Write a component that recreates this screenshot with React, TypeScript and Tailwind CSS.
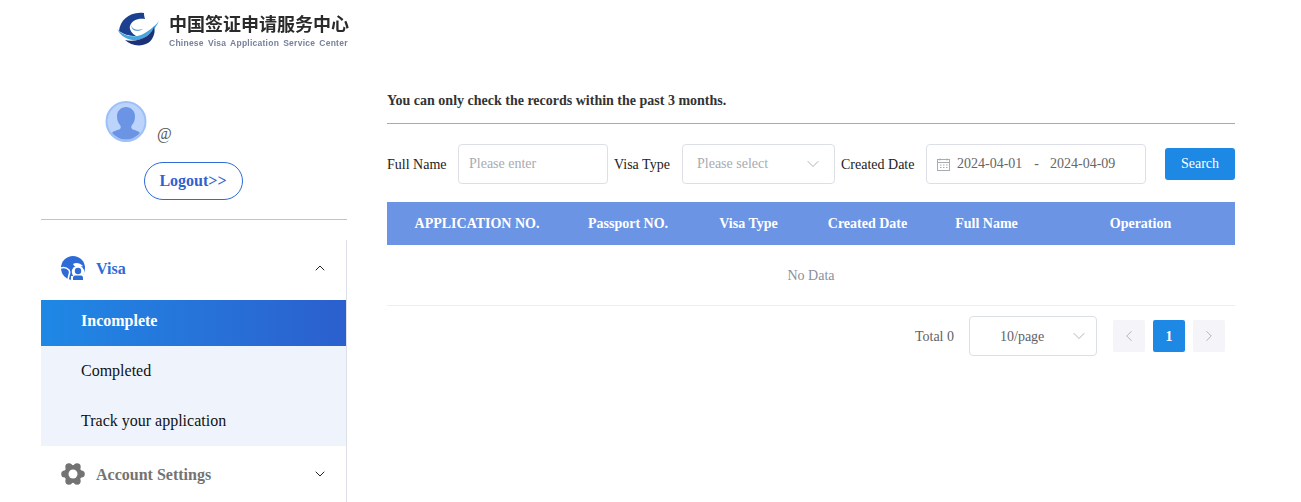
import { ChevronDown, ChevronLeft, ChevronRight, ChevronUp } from "lucide-react";

function Logo() {
    return (
        <div className="flex items-start">
            <svg width="44" height="36" viewBox="0 0 44 36" className="mt-[12px] blur-[0.4px]">
                <path d="M27 1C13-1 3 8 2 19c4 3 10 5 17 5-5-3-7-7-6-10 2-6 8-8 15-7-1-3-1-5-1-6z" fill="#1c3f8f" />
                <path d="M14 12c0 5 6 7 12 5-4 3-12 3-12-5z" fill="#3f8fd0" />
                <path d="M0 17c6 7 16 9 24 6 7-3 14-9 18-14-4 9-12 17-21 19C12 29 4 25 0 17z" fill="#45a5dd" />
                <path d="M8 28c7 2 16 0 22-4 4-3 6-6 7-9 2 5-1 13-6 16-7 4-17 3-23-3z" fill="#1c3278" />
            </svg>
            <div className="ml-[8px] mt-[12px] flex flex-col blur-[0.3px]">
                <span className="font-['Noto_Sans_CJK_SC',sans-serif] text-[18px] leading-[22px] font-bold text-[#2a2a2a] whitespace-nowrap">
                    中国签证申请服务中心
                </span>
                <span className="font-['Liberation_Sans',sans-serif] mt-[3px] text-[8.5px] leading-[12px] font-bold text-[#77819c] tracking-[0.25px] whitespace-nowrap [word-spacing:1.5px]">
                    Chinese Visa Application Service Center
                </span>
            </div>
        </div>
    );
}

function Avatar() {
    return (
        <svg width="42" height="42" viewBox="0 0 42 42">
            <defs>
                <clipPath id="avatar-clip">
                    <circle cx="21" cy="20.5" r="18" />
                </clipPath>
            </defs>
            <circle cx="21" cy="20.5" r="19.5" fill="#bcd4fb" stroke="#9cc0f7" strokeWidth="2" />
            <g clipPath="url(#avatar-clip)" fill="#6b94e4">
                <path d="M21 6c-5 0-9 4-9 9 0 4 1 7 3 9 1 1 1 3 0 4-2 1-7 2-9 5v9h30v-9c-2-3-7-4-9-5-1-1-1-3 0-4 2-2 3-5 3-9 0-5-4-9-9-9z" />
            </g>
        </svg>
    );
}

function GlobeIcon() {
    return (
        <svg width="24" height="24" viewBox="0 0 24 24" className="mb-[4px]">
            <circle cx="12" cy="12" r="12" fill="#2e6bd6" />
            <path d="M0 12c3-1 6 0 8 2 1 2 1 3 0 5l-1 5" fill="none" stroke="#fff" strokeWidth="1.6" />
            <path d="M12 8c3-2 7-1 10 2-3 1-5 2-6 1-2 0-3-1-4-3z" fill="#fff" />
            <circle cx="17" cy="16" r="6.2" fill="#fff" />
            <path d="M10 20h14v4H10z" fill="#fff" />
            <circle cx="17" cy="15" r="3.2" fill="#2e6bd6" />
            <path d="M12 24v-2.5c0-1 1-2 2-2h6c1 0 2 1 2 2V24z" fill="#2e6bd6" />
        </svg>
    );
}

const gearLobes = [0, 60, 120, 180, 240, 300];

function GearIcon() {
    return (
        <svg width="24" height="24" viewBox="0 0 24 24">
            <circle cx="12" cy="12" r="9" fill="#737373" />
            {gearLobes.map((angle) => (
                <circle
                    key={angle}
                    cx={12 + 8.2 * Math.cos((angle * Math.PI) / 180)}
                    cy={12 + 8.2 * Math.sin((angle * Math.PI) / 180)}
                    r="3.6"
                    fill="#737373"
                />
            ))}
            <circle cx="12" cy="12" r="4.5" fill="#fff" />
        </svg>
    );
}

function CalendarIcon() {
    return (
        <svg width="13" height="13" viewBox="0 0 13 13" fill="none" stroke="#a8abb2">
            <rect x="0.5" y="1.5" width="12" height="11" />
            <path d="M0.5 4.5h12M3 0.5v2M10 0.5v2" />
            <path d="M3 7h1.5M6 7h1.5M9 7h1.5M3 9.5h1.5M6 9.5h1.5M9 9.5h1.5" />
        </svg>
    );
}

const columns = ["APPLICATION NO.", "Passport NO.", "Visa Type", "Created Date", "Full Name", "Operation"];

function App() {
    return (
        <div className="h-screen overflow-hidden bg-white font-['Liberation_Serif',serif] text-[14px] text-[#222]">
            <div className="h-[71px] pl-[117px]">
                <Logo />
            </div>

            <div className="flex">
                <aside className="ml-[41px] w-[306px] shrink-0">
                    <div className="h-[149px] border-b border-[#c4c4c4] pt-[30px]">
                        <div className="flex pl-[64px]">
                            <Avatar />
                            <span className="ml-[10px] mt-[20px] text-[16px] leading-[26px] text-[#555]">@</span>
                        </div>
                        <div className="mt-[15px] flex justify-center pr-[2px]">
                            <button
                                type="button"
                                className="h-[38px] w-[99px] rounded-[19px] border border-[#2e6bd6] text-[16px] font-bold text-[#2e62d2]"
                            >
                                Logout&gt;&gt;
                            </button>
                        </div>
                    </div>

                    <nav className="mt-[20px] border-r border-[#dcdfe6]">
                        <div className="flex h-[60px] items-center pl-[20px] pr-[18px]">
                            <GlobeIcon />
                            <span className="ml-[11px] pb-[3px] text-[16px] font-bold text-[#2e6bd6]">Visa</span>
                            <ChevronUp size={16} strokeWidth={1.5} className="mb-[4px] ml-auto text-[#222]" />
                        </div>
                        <div className="flex h-[46px] items-center bg-gradient-to-r from-[#1e88e5] to-[#2b5fce] pb-[4px] pl-[40px] text-[16px] font-bold text-white">
                            Incomplete
                        </div>
                        <div className="flex h-[50px] items-center bg-[#eff4fc] pl-[40px] text-[16px] text-[#111]">Completed</div>
                        <div className="flex h-[50px] items-center bg-[#eff4fc] pl-[40px] text-[16px] text-[#111]">
                            Track your application
                        </div>
                        <div className="flex h-[56px] items-center pl-[20px] pr-[18px]">
                            <GearIcon />
                            <span className="ml-[11px] pt-[1px] text-[16px] font-bold text-[#737373]">Account Settings</span>
                            <ChevronDown size={16} strokeWidth={1.5} className="ml-auto text-[#222]" />
                        </div>
                    </nav>
                </aside>

                <main className="ml-[40px] w-[848px] shrink-0">
                    <div className="h-[53px] border-b border-[#a9a9a9] pt-[21px] font-bold leading-[18px] text-[#333]">
                        You can only check the records within the past 3 months.
                    </div>

                    <div className="mt-[20px] flex h-[40px] items-center">
                        <span className="w-[71px] text-[#222]">Full Name</span>
                        <div className="flex h-[40px] w-[150px] items-center rounded-[4px] border border-[#dcdfe6] pb-[2px] pl-[10px] text-[#a8abb2]">
                            Please enter
                        </div>
                        <span className="ml-[6px] w-[68px] text-[#222]">Visa Type</span>
                        <div className="flex h-[40px] w-[153px] items-center rounded-[4px] border border-[#dcdfe6] pl-[14px] pr-[11px] text-[#a8abb2]">
                            <span className="pb-[2px]">Please select</span>
                            <ChevronDown size={20} strokeWidth={1.1} className="ml-auto text-[#a8abb2]" />
                        </div>
                        <span className="ml-[6px] w-[85px] text-[#222]">Created Date</span>
                        <div className="flex h-[40px] w-[220px] items-center rounded-[4px] border border-[#dcdfe6] pl-[10px] text-[#666]">
                            <CalendarIcon />
                            <span className="ml-[7px] pb-[2px]">2024-04-01</span>
                            <span className="ml-[12px] pb-[2px]">-</span>
                            <span className="ml-[11px] pb-[2px]">2024-04-09</span>
                        </div>
                        <button
                            type="button"
                            className="ml-[19px] h-[32px] w-[70px] rounded-[3px] bg-[#1e88e5] pb-[2px] text-white"
                        >
                            Search
                        </button>
                    </div>

                    <div className="mt-[18px] grid h-[43px] grid-cols-[180px_122px_119px_119px_119px_189px] items-center bg-[#6c94e4] text-center font-bold text-white">
                        {columns.map((column) => (
                            <span key={column}>{column}</span>
                        ))}
                    </div>
                    <div className="flex h-[61px] items-center justify-center border-b border-[#ebeef5] text-[#8a909c]">No Data</div>

                    <div className="mt-[10px] flex h-[40px] items-center pr-[10px]">
                        <span className="ml-auto text-[#606266]">Total 0</span>
                        <div className="ml-[15px] flex h-[40px] w-[128px] items-center rounded-[4px] border border-[#dcdfe6] pl-[30px] pr-[7px] text-[#606266]">
                            10/page
                            <ChevronDown size={20} strokeWidth={1.1} className="ml-auto text-[#a8abb2]" />
                        </div>
                        <div className="ml-[16px] flex h-[32px] w-[32px] items-center justify-center rounded-[2px] bg-[#f4f4f9] text-[#a8abb2]">
                            <ChevronLeft size={18} strokeWidth={1.2} />
                        </div>
                        <div className="ml-[8px] flex h-[32px] w-[32px] items-center justify-center rounded-[2px] bg-[#1e88e5] font-bold text-white">
                            1
                        </div>
                        <div className="ml-[8px] flex h-[32px] w-[32px] items-center justify-center rounded-[2px] bg-[#f4f4f9] text-[#a8abb2]">
                            <ChevronRight size={18} strokeWidth={1.2} />
                        </div>
                    </div>
                </main>
            </div>
        </div>
    );
}

export default App;
